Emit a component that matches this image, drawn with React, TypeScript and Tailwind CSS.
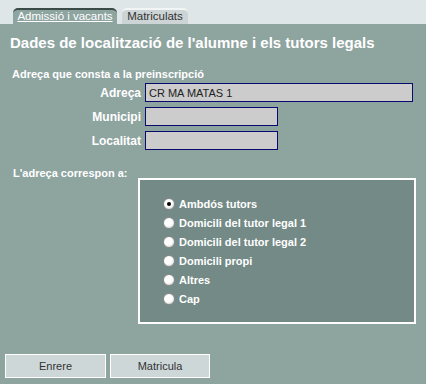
import React from 'react';

const OPTIONS = [
  'Ambdós tutors',
  'Domicili del tutor legal 1',
  'Domicili del tutor legal 2',
  'Domicili propi',
  'Altres',
  'Cap',
];

function Radio({ checked }: { checked: boolean }) {
  return (
    <span className="relative flex h-[12px] w-[12px] shrink-0 items-center justify-center rounded-full border border-[#8a8a8a] bg-[radial-gradient(circle_at_40%_35%,#ffffff_45%,#c8c8c8_100%)]">
      {checked && <span className="h-[4px] w-[4px] rounded-full bg-black" />}
    </span>
  );
}

export default function App() {
  return (
    <div className="flex h-[384px] w-[426px] flex-col bg-[#dfe6e7] font-['Liberation_Sans',Arial,sans-serif]">
      {/* tabs */}
      <div className="flex h-[24px] items-end gap-[5px] pl-[13px]">
        <div className="flex h-[16px] w-[104px] items-center justify-center rounded-t-[5px] border-t-2 border-[#3a4a46] bg-[#8ea49f] text-[11.5px] text-white underline">
          Admissió i vacants
        </div>
        <div className="flex h-[16px] w-[66px] items-center justify-center rounded-t-[5px] border-t-2 border-[#f2f5f5] bg-[#cdd4d5] text-[11.5px] text-[#333]">
          Matriculats
        </div>
      </div>

      {/* panel */}
      <div className="flex flex-1 flex-col bg-[#8ea49f] pb-[6px]">
        <h1 className="pl-[10px] pt-[10px] text-[15px] font-bold leading-[18px] text-white">
          Dades de localització de l'alumne i els tutors legals
        </h1>

        <div className="mt-[16px] pl-[12px] text-[11px] font-bold leading-[13px] text-white">
          Adreça que consta a la preinscripció
        </div>

        <div className="mt-[2px] grid grid-cols-[141px_auto] items-center gap-x-[4px] gap-y-[5px]">
          <label className="text-right text-[12px] font-bold text-white">Adreça</label>
          <input
            readOnly
            value="CR MA MATAS 1"
            className="h-[19px] w-[268px] border border-[#0a0a6e] bg-[#cccccc] px-[3px] text-[11px] text-[#222] outline-none"
          />
          <label className="text-right text-[12px] font-bold text-white">Municipi</label>
          <input readOnly className="h-[19px] w-[133px] border border-[#0a0a6e] bg-[#cccccc] outline-none" />
          <label className="text-right text-[12px] font-bold text-white">Localitat</label>
          <input readOnly className="h-[19px] w-[133px] border border-[#0a0a6e] bg-[#cccccc] outline-none" />
        </div>

        <div className="mt-[17px] pl-[13px] text-[11px] font-bold leading-[13px] text-white">
          L'adreça correspon a:
        </div>

        <div className="ml-[138px] mt-[-2px] flex h-[146px] w-[278px] flex-col gap-[5px] border-2 border-white bg-[#748a86] pl-[23px] pt-[17px]">
          {OPTIONS.map((o, i) => (
            <div key={o} className="flex items-center gap-[4px] text-[11px] font-bold leading-[14px] text-white">
              <Radio checked={i === 0} />
              <span>{o}</span>
            </div>
          ))}
        </div>

        <div className="mt-auto flex gap-[4px] pl-[5px]">
          <button className="h-[24px] w-[101px] border border-white bg-[#cdd7d8] text-[11px] text-[#333]">Enrere</button>
          <button className="h-[24px] w-[100px] border border-white bg-[#cdd7d8] text-[11px] text-[#333]">Matricula</button>
        </div>
      </div>
    </div>
  );
}
